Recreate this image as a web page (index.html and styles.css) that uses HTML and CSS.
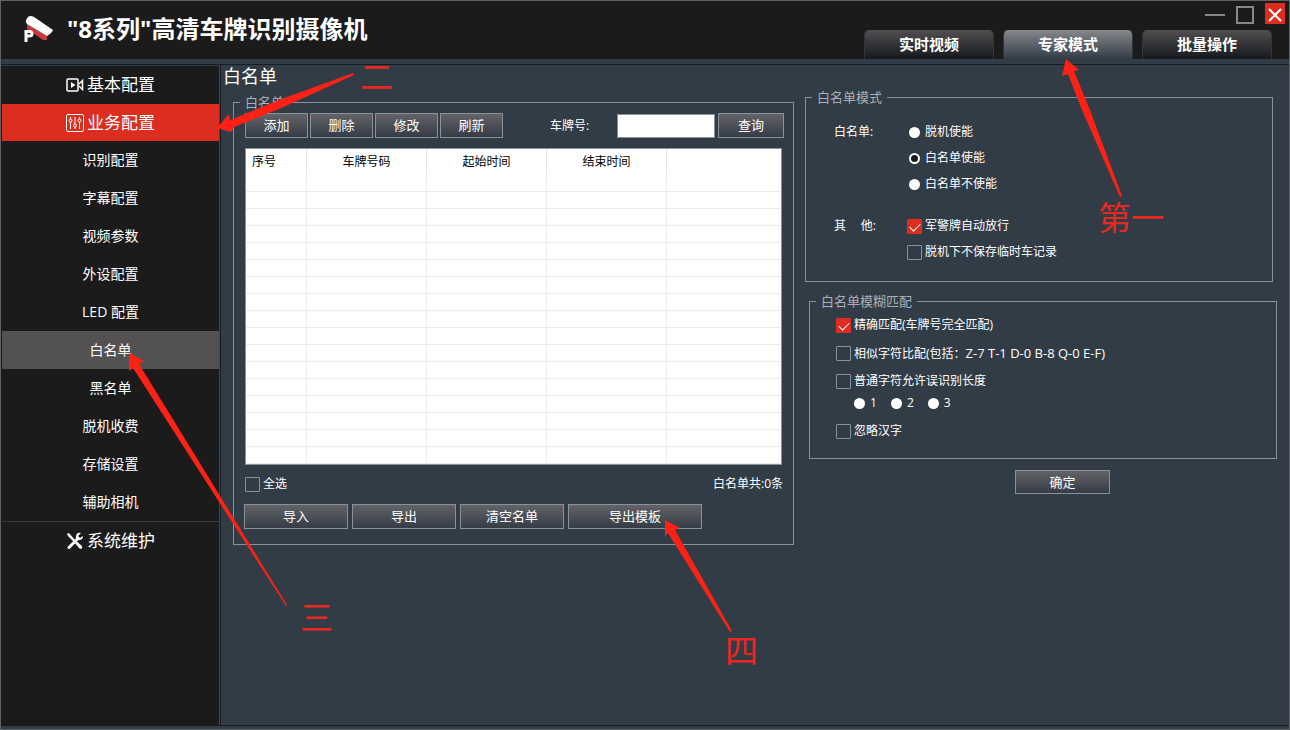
FILE: index.html
```
<!DOCTYPE html>
<html lang="zh-CN">
  <head>
    <meta charset="UTF-8" />
    <meta name="viewport" content="width=device-width, initial-scale=1.0" />
    <title>"8系列"高清车牌识别摄像机</title>
    <link rel="stylesheet" href="styles.css">
  </head>
  <body>
    <header class="header">
      <svg class="logo" width="30" height="30" viewBox="0 0 30 30" aria-hidden="true">
        <path d="M4 9L24 21L24 25L20 25L4 14Z" fill="#c8393b" />
        <path d="M3 27V15M3 16.500H7Q9 17 9 19Q9 21 6 21H4" fill="none" stroke="#fff" stroke-width="3" />
        <path d="M5 2Q7 0 11 2L30 15Q29 18 24 21L4 9Q2 7 3 5Z" fill="#fff" />
      </svg>
      <h1>"8系列"高清车牌识别摄像机</h1>

      <div class="header-right">
        <div class="window-controls">
          <button type="button" class="win-btn" aria-label="最小化">
            <svg width="20" height="20"><path d="M0 11H20" stroke="#888" stroke-width="2" /></svg>
          </button>
          <button type="button" class="win-btn" aria-label="最大化">
            <svg width="20" height="20"><rect x="2" y="3" width="16" height="16" fill="none" stroke="#888" stroke-width="2" /></svg>
          </button>
          <button type="button" class="win-btn win-close" aria-label="关闭">
            <svg width="20" height="20"><path d="M4 5L16 17M16 5L4 17" stroke="#fff" stroke-width="2" /></svg>
          </button>
        </div>
        <nav class="tabs">
          <button type="button" class="tab">实时视频</button>
          <button type="button" class="tab active">专家模式</button>
          <button type="button" class="tab">批量操作</button>
        </nav>
      </div>
    </header>

    <div class="layout">
      <nav class="sidebar">
        <a href="#" class="menu">
          <svg width="18" height="16" viewBox="0 0 18 16" fill="none" stroke="#fff" stroke-width="1.5">
            <rect x="1" y="2" width="11" height="12" rx="1" />
            <path d="M13 7L16.500 3.500V12.500L13 9" />
            <path d="M5 5L9.500 8L5 11Z" fill="#fff" stroke="none" />
          </svg>
          基本配置
        </a>
        <a href="#" class="menu open">
          <svg width="18" height="18" viewBox="0 0 18 18" fill="none" stroke="#fff">
            <rect x="0.5" y="0.5" width="17" height="17" rx="1.5" />
            <path d="M4.5 3V5M4.5 8V15M9 3V10M9 13V15M13.5 3V5M13.5 8V15" />
            <circle cx="4.5" cy="6.5" r="1.5" />
            <circle cx="9" cy="11.5" r="1.5" />
            <circle cx="13.5" cy="6.5" r="1.5" />
          </svg>
          业务配置
        </a>
        <a href="#" class="submenu">识别配置</a>
        <a href="#" class="submenu">字幕配置</a>
        <a href="#" class="submenu">视频参数</a>
        <a href="#" class="submenu">外设配置</a>
        <a href="#" class="submenu">LED 配置</a>
        <a href="#" class="submenu current">白名单</a>
        <a href="#" class="submenu">黑名单</a>
        <a href="#" class="submenu">脱机收费</a>
        <a href="#" class="submenu">存储设置</a>
        <a href="#" class="submenu">辅助相机</a>
        <a href="#" class="menu last">
          <svg width="18" height="18" viewBox="0 0 18 18">
            <path d="M1 2L3 1L9 8L16 14Q17 16 15 17Q14 17 13 16L8 10L2 4Z" fill="#fff" />
            <path d="M3 15.500L12 6.500" stroke="#fff" stroke-width="3" stroke-linecap="round" />
            <path d="M15 1Q11 0 10 4Q9 8 13 8Q17 8 17 4L14 6L12 4Z" fill="#fff" />
          </svg>
          系统维护
        </a>
      </nav>

      <main class="content">
        <h2>白名单</h2>
        <div class="columns">
          <fieldset class="list-box">
            <legend>白名单</legend>
            <div class="list-body">
              <div class="toolbar">
                <button type="button" class="btn">添加</button>
                <button type="button" class="btn">删除</button>
                <button type="button" class="btn">修改</button>
                <button type="button" class="btn">刷新</button>
                <label for="plate">车牌号:</label>
                <input type="text" id="plate" class="plate-input" />
                <button type="button" class="btn search-btn">查询</button>
              </div>

              <table class="list">
                <colgroup>
                  <col class="col-index" />
                  <col class="col-data" />
                  <col class="col-data" />
                  <col class="col-data" />
                  <col />
                </colgroup>
                <thead>
                  <tr><th>序号</th><th>车牌号码</th><th>起始时间</th><th>结束时间</th><th></th></tr>
                </thead>
                <tbody>
                  <tr><td></td><td></td><td></td><td></td><td></td></tr>
                  <tr><td></td><td></td><td></td><td></td><td></td></tr>
                  <tr><td></td><td></td><td></td><td></td><td></td></tr>
                  <tr><td></td><td></td><td></td><td></td><td></td></tr>
                  <tr><td></td><td></td><td></td><td></td><td></td></tr>
                  <tr><td></td><td></td><td></td><td></td><td></td></tr>
                  <tr><td></td><td></td><td></td><td></td><td></td></tr>
                  <tr><td></td><td></td><td></td><td></td><td></td></tr>
                  <tr><td></td><td></td><td></td><td></td><td></td></tr>
                  <tr><td></td><td></td><td></td><td></td><td></td></tr>
                  <tr><td></td><td></td><td></td><td></td><td></td></tr>
                  <tr><td></td><td></td><td></td><td></td><td></td></tr>
                  <tr><td></td><td></td><td></td><td></td><td></td></tr>
                  <tr><td></td><td></td><td></td><td></td><td></td></tr>
                  <tr><td></td><td></td><td></td><td></td><td></td></tr>
                  <tr><td></td><td></td><td></td><td></td><td></td></tr>
                  <tr><td></td><td></td><td></td><td></td><td></td></tr>
                </tbody>
              </table>

              <div class="list-footer">
                <label class="option"><input type="checkbox" />全选</label>
                <span>白名单共:0条</span>
              </div>
              <div class="actions">
                <button type="button" class="btn">导入</button>
                <button type="button" class="btn">导出</button>
                <button type="button" class="btn">清空名单</button>
                <button type="button" class="btn wide">导出模板</button>
              </div>
            </div>
          </fieldset>

          <form class="settings">
            <fieldset class="mode-box">
              <legend>白名单模式</legend>
              <div class="mode-body">
                <div class="setting">
                  <span class="setting-name">白名单:</span>
                  <div class="options">
                    <label class="option"><input type="radio" name="mode" />脱机使能</label>
                    <label class="option"><input type="radio" name="mode" checked />白名单使能</label>
                    <label class="option"><input type="radio" name="mode" />白名单不使能</label>
                  </div>
                </div>
                <div class="setting">
                  <span class="setting-name"><span>其</span><span>他:</span></span>
                  <div class="options">
                    <label class="option"><input type="checkbox" checked />军警牌自动放行</label>
                    <label class="option"><input type="checkbox" />脱机下不保存临时车记录</label>
                  </div>
                </div>
              </div>
            </fieldset>

            <fieldset class="match-box">
              <legend>白名单模糊匹配</legend>
              <div class="match-body">
                <label class="option"><input type="checkbox" checked />精确匹配(车牌号完全匹配)</label>
                <label class="option"><input type="checkbox" /><span>相似字符比配(包括：<span class="pairs">Z-7 T-1 D-0 B-8 Q-0 E-F)</span></span></label>
                <label class="option"><input type="checkbox" />普通字符允许误识别长度</label>
                <div class="lengths">
                  <label class="option"><input type="radio" name="length" />1</label>
                  <label class="option"><input type="radio" name="length" />2</label>
                  <label class="option"><input type="radio" name="length" />3</label>
                </div>
                <label class="option"><input type="checkbox" />忽略汉字</label>
              </div>
            </fieldset>

            <button type="button" class="btn confirm-btn">确定</button>
          </form>
        </div>
      </main>
    </div>

    <!-- step arrows over the window -->
    <svg class="guide" width="1290" height="730" viewBox="0 0 1290 730">
      <g fill="#ff2115">
        <path d="M1066 59L1079 70L1074 71L1090 110L1122 196L1120 197L1082 110L1068 74L1062 76Z" />
        <path d="M217 128L229 114L230 120L279 100L353 73L354 75L279 109L234 127L231 132Z" />
        <path d="M129 353L144 361L139 364L287 605L286 606L133 368L129 371Z" />
        <path d="M665 520L680 528L675 530L732 631L730 632L668 533L665 536Z" />
      </g>
      <g class="guide-text">
        <text x="1098" y="230">第一</text>
        <text x="360" y="89">二</text>
        <text x="300" y="630">三</text>
        <text x="725" y="663">四</text>
      </g>
    </svg>
  </body>
</html>
```

FILE: styles.css
```
* {
  margin: 0;
  padding: 0;
  box-sizing: border-box;
}

:root {
  --panel: #323c46;
  --dark: #1b1b1b;
  --line: #87929b;
  --red: #dc2d20;
  font-family: "Open Sans", "Noto Sans CJK SC", sans-serif;
}

body {
  position: relative;
  display: flex;
  flex-direction: column;
  min-height: 100vh;
  border: 1px solid #5b6265;
  background: var(--panel);
  color: #fff;
  font-size: 12px;
  line-height: 16px;
}

button,
input {
  font: inherit;
  color: inherit;
}

a {
  color: inherit;
  text-decoration: none;
}

.header {
  display: flex;
  height: 58px;
  padding-left: 22px;
  background: var(--dark);
}

.logo {
  margin-top: 14px;
}

.header h1 {
  margin-left: 14px;
  font-size: 24px;
  line-height: 56px;
}

.header-right {
  display: flex;
  flex-direction: column;
  justify-content: space-between;
  margin-left: auto;
}

.window-controls {
  display: flex;
  justify-content: flex-end;
  gap: 10px;
  padding: 2px 4px 0 0;
}

.win-btn {
  width: 20px;
  height: 21px;
  border: none;
  background: none;
}

.win-btn svg {
  display: block;
}

.win-close {
  background: var(--red);
}

.tabs {
  display: flex;
  gap: 9px;
  padding-right: 17px;
}

.tab {
  width: 130px;
  height: 29px;
  padding-bottom: 2px;
  border: 1px solid #30363b;
  border-width: 0 1px;
  border-radius: 5px 5px 0 0;
  background: linear-gradient(#514e50, #14191e);
  font-size: 15px;
  font-weight: bold;
}

.tab.active {
  background: linear-gradient(#85888c, var(--panel));
}

.layout {
  display: flex;
  flex: 1;
  margin: 5px 0 3px;
  border: 1px solid #171d23;
  border-width: 1px 0;
}

.sidebar {
  width: 219px;
  padding-left: 1px;
  margin-top: 1px;
  border-right: 1px solid #414951;
  background: var(--dark);
}

.menu,
.submenu {
  display: flex;
  align-items: center;
  justify-content: center;
  height: 38px;
  font-size: 14px;
}

.menu {
  gap: 3px;
  font-size: 17px;
}

.menu.open {
  height: 37px;
  background: var(--red);
}

.submenu.current {
  background: #545152;
}

.menu.last {
  border-top: 1px solid #3a3d3f;
}

.content {
  flex: 1;
  padding: 0 12px 0 2px;
  border-left: 1px solid #171d23;
}

.content h2 {
  font-size: 18px;
  font-weight: normal;
  line-height: 22px;
}

fieldset {
  min-width: 0;
  border: 1px solid var(--line);
}

legend {
  margin-left: 6px;
  padding: 0 5px;
  color: #a9afb4;
  font-size: 13px;
}

.columns {
  display: flex;
  gap: 11px;
  padding-left: 10px;
}

.list-box {
  flex: 0 0 561px;
  align-self: flex-start;
  margin-top: 7px;
}

.list-body {
  padding: 3px 9px 15px 10px;
}

.toolbar {
  display: flex;
  align-items: center;
  gap: 2px;
  padding-left: 1px;
}

.btn {
  width: 63px;
  height: 25px;
  padding-bottom: 1px;
  border: 1px solid var(--line);
  background: linear-gradient(#636367, #343c46);
  font-size: 13px;
}

.toolbar label {
  margin-left: 45px;
}

.plate-input {
  width: 98px;
  height: 24px;
  margin-left: auto;
  padding: 0 4px;
  border: 1px solid var(--line);
  background: #fff;
  color: #000;
}

.search-btn {
  width: 66px;
  margin-left: 1px;
}

.list {
  width: 537px;
  margin: 10px 0 11px 1px;
  border: 1px solid var(--line);
  border-collapse: separate;
  border-spacing: 0;
  table-layout: fixed;
  background: #fff;
  color: #000;
}

.col-index {
  width: 61px;
}

.col-data {
  width: 120px;
}

.list th {
  height: 26px;
  border-right: 1px solid #e4e4e4;
  font-weight: normal;
}

.list th:first-child {
  padding-left: 6px;
  text-align: left;
}

.list td {
  height: 17px;
  border-right: 1px solid #ececec;
  border-bottom: 1px solid #ececec;
}

.list th:last-child,
.list td:last-child {
  border-right: none;
}

.list-footer {
  display: flex;
  justify-content: space-between;
  height: 28px;
  padding: 0 1px;
}

.option {
  display: flex;
  align-items: center;
  gap: 3px;
  height: 16px;
  line-height: 18px;
}

.option input {
  flex: none;
  appearance: none;
}

.option input[type="checkbox"] {
  width: 15px;
  height: 15px;
  border: 1px solid var(--line);
  border-radius: 1px;
}

.option input[type="checkbox"]:checked {
  border-color: var(--red);
  background: var(--red);
}

.option input[type="checkbox"]:checked::after {
  content: "";
  display: block;
  width: 9px;
  height: 5px;
  margin: 3px 2px;
  border: solid #fff;
  border-width: 0 0 1px 1px;
  transform: rotate(-45deg);
}

.option input[type="radio"] {
  width: 11px;
  height: 11px;
  margin: 0 2px;
  border-radius: 50%;
  background: #fff;
}

.option input[type="radio"]:checked {
  border: 2px solid #fff;
  background: var(--dark);
}

.actions {
  display: flex;
  gap: 4px;
}

.actions .btn {
  width: 104px;
}

.actions .wide {
  width: 134px;
}

.settings {
  display: flex;
  flex: 1;
  flex-direction: column;
}

.mode-box {
  margin: 2px 4px 11px 0;
}

.mode-body {
  padding: 19px 28px 21px;
}

.setting {
  display: flex;
}

.setting + .setting {
  margin-top: 26px;
}

.setting-name {
  display: flex;
  justify-content: space-between;
  width: 42px;
  margin-right: 31px;
}

.options {
  display: flex;
  flex-direction: column;
  gap: 10px;
}

.match-box {
  margin-left: 4px;
}

.match-body {
  display: flex;
  flex-direction: column;
  gap: 12px;
  padding: 8px 26px 19px;
}

.pairs {
  font-size: 13px;
}

.lengths {
  display: flex;
  gap: 12px;
  margin: -6px 0 0 16px;
}

.confirm-btn {
  width: 95px;
  height: 24px;
  margin: 11px 0 0 210px;
}

.guide {
  position: absolute;
  top: -1px;
  left: -1px;
  pointer-events: none;
}

.guide-text {
  fill: #e9281f;
  font-size: 33px;
}
```
